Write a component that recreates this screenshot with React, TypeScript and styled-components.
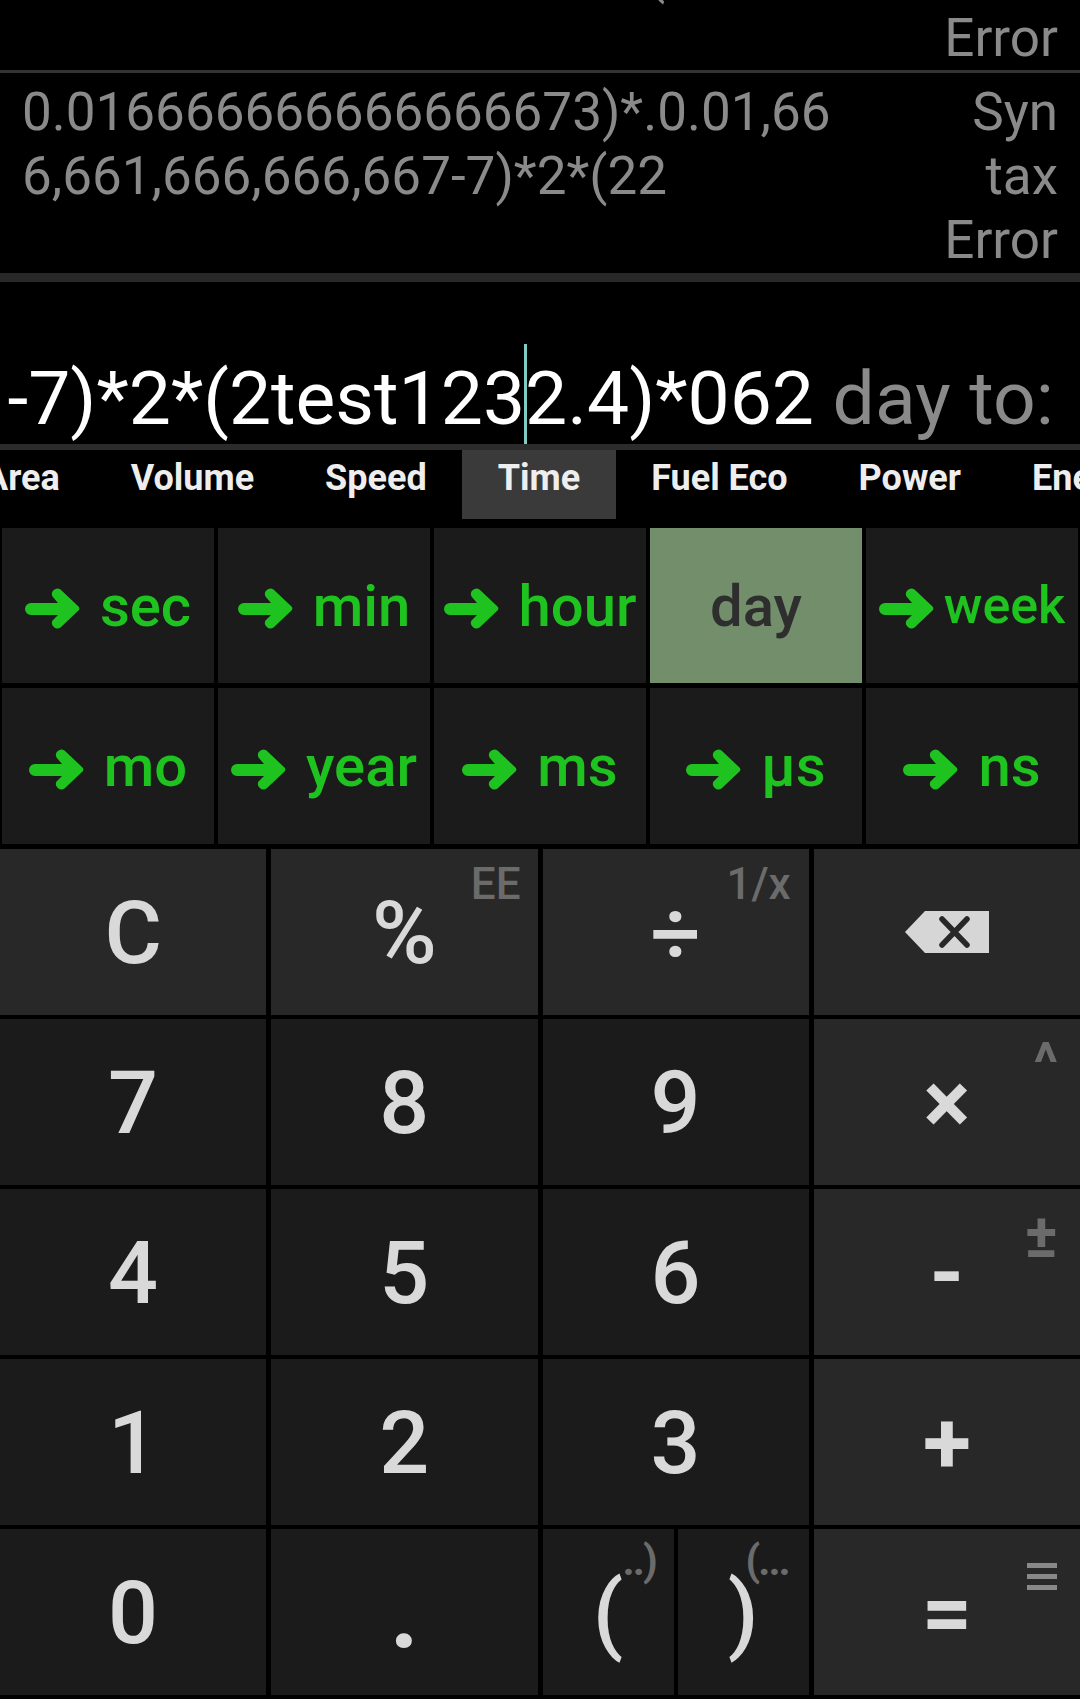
import React from 'react';
import styled, { createGlobalStyle } from 'styled-components';

const GlobalStyle = createGlobalStyle`
  body {
    margin: 0;
    background: #000;
  }
`;

const Screen = styled.div`
  width: 1080px;
  height: 1699px;
  overflow: hidden;
  background: #000;
  font-family: Roboto, "Noto Sans", sans-serif;
`;

const Entry = styled.div<{ $first?: boolean }>`
  display: flex;
  justify-content: space-between;
  padding: 7px 22px 0;
  margin-top: ${(p) => (p.$first ? '-129px' : '0')};
  font-size: 53px;
  line-height: 64px;
  color: #8a8a8a;
  white-space: nowrap;
`;

const Result = styled.div`
  text-align: right;
`;

const ThinRule = styled.div`
  height: 3px;
  background: #333;
`;

const ThickRule = styled.div`
  height: 9px;
  margin-top: 1px;
  background: #282828;
`;

const Input = styled.div`
  height: 162px;
  display: flex;
  align-items: flex-end;
  justify-content: flex-end;
  padding-right: 26px;
  overflow: hidden;
  white-space: nowrap;
  font-size: 75px;
  color: #fff;
`;

const Cursor = styled.span`
  display: inline-block;
  width: 3px;
  height: 100px;
  margin: 0 -1.5px;
  vertical-align: -20px;
  background: #80cbc4;
`;

const Hint = styled.span`
  color: #8a8a8a;
`;

const InputRule = styled.div`
  height: 6px;
  background: #2b2b2b;
`;

const TabBar = styled.nav`
  height: 78px;
  overflow: hidden;
  display: flex;
`;

const TabStrip = styled.div`
  display: flex;
  margin-left: -51.5px;
`;

const Tab = styled.div<{ $active?: boolean }>`
  flex-shrink: 0;
  height: 69px;
  padding: 7px 35.5px 0;
  box-sizing: border-box;
  font-size: 36px;
  font-weight: 700;
  color: #eee;
  white-space: nowrap;
  background: ${(p) => (p.$active ? '#3a3a3a' : 'transparent')};
`;

const UnitGrid = styled.div`
  display: grid;
  grid-template-columns: repeat(5, 1fr);
  grid-template-rows: 155px 156px;
  gap: 5px 4px;
  padding: 0 2px;
`;

const UnitCell = styled.div<{ $active?: boolean; $gap?: number }>`
  display: flex;
  align-items: center;
  justify-content: center;
  gap: ${(p) => p.$gap ?? 20}px;
  background: ${(p) => (p.$active ? '#738e6b' : '#1b1b1b')};
  color: ${(p) => (p.$active ? '#2e2e2e' : '#1fc31f')};
  font-size: 58px;
  font-weight: 500;
`;

const UnitText = styled.span<{ $size?: number }>`
  font-size: ${(p) => p.$size ?? 58}px;
`;

const ArrowIcon = styled.svg`
  flex-shrink: 0;
  margin-top: 6px;
`;

const Keypad = styled.div`
  display: grid;
  grid-template-columns: repeat(4, 1fr);
  grid-auto-rows: 166px;
  gap: 4px 5px;
  margin-top: 5px;
`;

const Key = styled.div<{ $op?: boolean }>`
  position: relative;
  display: flex;
  align-items: center;
  justify-content: center;
  background: ${(p) => (p.$op ? '#282828' : '#1b1b1b')};
  color: #d9d9d9;
  font-size: 88px;
  font-weight: 500;
`;

const Label = styled.span<{ $size?: number; $weight?: number }>`
  position: relative;
  z-index: 1;
  font-size: ${(p) => p.$size ?? 88}px;
  font-weight: ${(p) => p.$weight ?? 500};
`;

const Sup = styled.span<{ $top: number; $right: number; $size?: number; $weight?: number; $tight?: boolean }>`
  position: absolute;
  top: ${(p) => p.$top}px;
  right: ${(p) => p.$right}px;
  font-size: ${(p) => p.$size ?? 44}px;
  font-weight: ${(p) => p.$weight ?? 500};
  letter-spacing: ${(p) => (p.$tight ? '-2px' : 'normal')};
  line-height: 1;
  color: #6b6b6b;
`;

const SupIcon = styled.svg<{ $top: number; $right: number }>`
  position: absolute;
  top: ${(p) => p.$top}px;
  right: ${(p) => p.$right}px;
`;

const ParenPair = styled.div`
  display: grid;
  grid-template-columns: 1fr 1fr;
  gap: 4px;
`;

const Arrow = () => (
  <ArrowIcon width="55" height="41" viewBox="0 0 55 41">
    <path
      fill="#1fc31f"
      d="M6 15 H33 L27.5 8.5 A5.5 5.5 0 0 1 35.5 1.5 L53.5 18.5 A3 3 0 0 1 53.5 22.5 L35.5 39.5 A5.5 5.5 0 0 1 27.5 32.5 L33 27 H6 A6 6 0 0 1 6 15 Z"
    />
  </ArrowIcon>
);

const Backspace = () => (
  <svg width="84" height="42" viewBox="0 0 84 42">
    <path fill="#d6d6d6" d="M0 21 L20 0 H84 V42 H20 Z" />
    <path stroke="#282828" strokeWidth="5.5" strokeLinecap="round" d="M37 8 L62 34 M62 8 L37 34" />
  </svg>
);

const HistoryIcon = () => (
  <SupIcon $top={34} $right={23} width="30" height="27" viewBox="0 0 30 27">
    <rect y="0" width="30" height="5" fill="#888" />
    <rect y="11" width="30" height="5" fill="#888" />
    <rect y="22" width="30" height="5" fill="#888" />
  </SupIcon>
);

const tabs = ['Area', 'Volume', 'Speed', 'Time', 'Fuel Eco', 'Power', 'Energy'];

const units: { name: string; active?: boolean; size?: number; gap?: number }[] = [
  { name: 'sec' },
  { name: 'min' },
  { name: 'hour' },
  { name: 'day', active: true },
  { name: 'week', size: 52, gap: 10 },
  { name: 'mo' },
  { name: 'year' },
  { name: 'ms' },
  { name: 'µs' },
  { name: 'ns' },
];

const digitRows = [
  ['7', '8', '9'],
  ['4', '5', '6'],
  ['1', '2', '3'],
];

const App = () => {
  return (
    <Screen>
      <GlobalStyle />
      <section>
        <Entry $first>
          <div>
            <div>7)*2*(2test1232.4)*0.0166666666</div>
            <div>.666,666,666,666,666,666*(</div>
          </div>
          <Result>
            <div>Syn</div>
            <div>tax</div>
            <div>Error</div>
          </Result>
        </Entry>
        <ThinRule />
        <Entry>
          <div>
            <div>0.016666666666666673)*.0.01,66</div>
            <div>6,661,666,666,667-7)*2*(22</div>
          </div>
          <Result>
            <div>Syn</div>
            <div>tax</div>
            <div>Error</div>
          </Result>
        </Entry>
      </section>
      <ThickRule />

      <Input>
        <div>
          -7)*2*(2test123
          <Cursor />
          2.4)*062
          <Hint> day to:</Hint>
        </div>
      </Input>
      <InputRule />

      <TabBar>
        <TabStrip>
          {tabs.map((t) => (
            <Tab key={t} $active={t === 'Time'}>
              {t}
            </Tab>
          ))}
        </TabStrip>
      </TabBar>

      <UnitGrid>
        {units.map((u) => (
          <UnitCell key={u.name} $active={u.active} $gap={u.gap}>
            {!u.active && <Arrow />}
            <UnitText $size={u.size}>{u.name}</UnitText>
          </UnitCell>
        ))}
      </UnitGrid>

      <Keypad>
        <Key $op>
          <Label>C</Label>
        </Key>
        <Key $op>
          <Label>%</Label>
          <Sup $top={13} $right={17}>EE</Sup>
        </Key>
        <Key $op>
          <Label>÷</Label>
          <Sup $top={13} $right={18}>1/x</Sup>
        </Key>
        <Key $op>
          <Backspace />
        </Key>

        {digitRows.map((row, i) => (
          <React.Fragment key={i}>
            {row.map((d) => (
              <Key key={d}>
                <Label>{d}</Label>
              </Key>
            ))}
            {i === 0 && (
              <Key $op>
                <Label $weight={700}>×</Label>
                <Sup $top={16} $right={22} $size={56} $weight={700}>^</Sup>
              </Key>
            )}
            {i === 1 && (
              <Key $op>
                <Label $weight={700}>-</Label>
                <Sup $top={16} $right={22} $size={62} $weight={700}>±</Sup>
              </Key>
            )}
            {i === 2 && (
              <Key $op>
                <Label $weight={700}>+</Label>
              </Key>
            )}
          </React.Fragment>
        ))}

        <Key>
          <Label>0</Label>
        </Key>
        <Key>
          <Label $size={100} $weight={700}>.</Label>
        </Key>
        <ParenPair>
          <Key>
            <Label>(</Label>
            <Sup $top={11} $right={18} $size={42} $weight={700} $tight>..)</Sup>
          </Key>
          <Key>
            <Label>)</Label>
            <Sup $top={11} $right={20} $size={42} $weight={700} $tight>(...</Sup>
          </Key>
        </ParenPair>
        <Key $op>
          <Label $weight={700}>=</Label>
          <HistoryIcon />
        </Key>
      </Keypad>
    </Screen>
  );
};

export default App;
